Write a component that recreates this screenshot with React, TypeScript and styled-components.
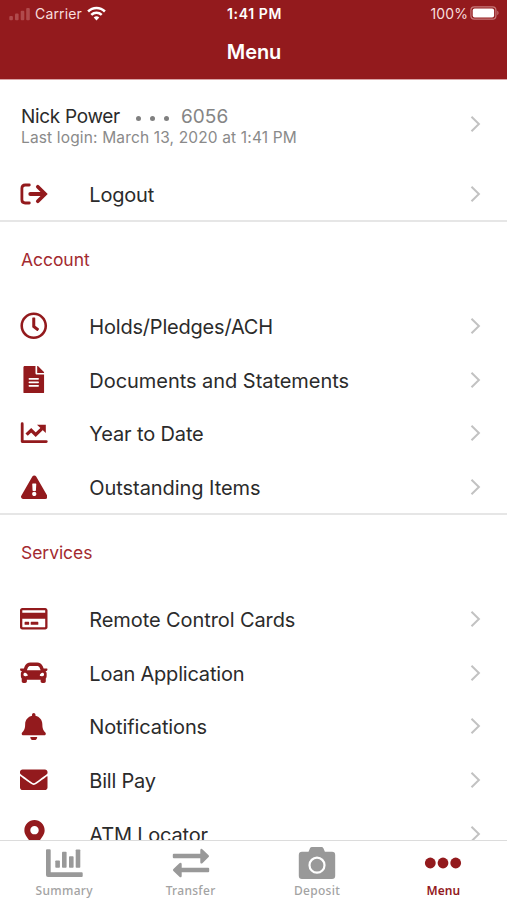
import React from "react";
import styled, { createGlobalStyle } from "styled-components";
import {
  FaBell,
  FaCar,
  FaEnvelope,
  FaExclamationTriangle,
  FaFileAlt,
  FaMapMarkerAlt,
  FaRegClock,
  FaRegCreditCard,
} from "react-icons/fa";

const RED = "#931a1d";
const GREY = "#999999";

const GlobalStyle = createGlobalStyle`
  * { box-sizing: border-box; }
  html, body { margin: 0; background: #fff; }
  body { font-family: Inter, "Liberation Sans", sans-serif; color: #2b2b2b; overflow: hidden; }
`;

const Screen = styled.div`
  width: 507px;
  height: 900px;
  display: flex;
  flex-direction: column;
  background: #fff;
  overflow: hidden;
`;

const Header = styled.header`
  flex: none;
  height: 80px;
  background: ${RED};
  border-bottom: 1px solid #d9a3a5;
  color: #fff;
`;

const StatusBar = styled.div`
  height: 27px;
  padding: 0 7px 0 9px;
  display: grid;
  grid-template-columns: 1fr auto 1fr;
  align-items: center;
  font-size: 14px;
  line-height: 27px;
`;

const StatusGroup = styled.div<{ $end?: boolean }>`
  display: flex;
  align-items: center;
  justify-content: ${(p) => (p.$end ? "flex-end" : "flex-start")};
`;

const StatusText = styled.span<{ $spacing: number }>`
  color: #f7dede;
  letter-spacing: ${(p) => p.$spacing}px;
`;

const Clock = styled.span`
  font-weight: 600;
  font-size: 14px;
  letter-spacing: 0.6px;
`;

const Signal = styled.svg`
  width: 22px;
  height: 14px;
  margin-right: 4px;
`;

const Wifi = styled.svg`
  width: 19px;
  height: 15px;
  margin-left: 5px;
  margin-top: -1px;
`;

const Battery = styled.svg`
  width: 30px;
  height: 14px;
  margin-left: 2px;
  margin-top: -1px;
`;

const Title = styled.h1`
  margin: 0;
  height: 51px;
  padding-left: 1px;
  text-align: center;
  font-size: 20px;
  font-weight: 600;
  line-height: 51px;
  letter-spacing: -0.1px;
`;

const Content = styled.main`
  flex: 1;
  min-height: 0;
  overflow: hidden;
`;

const Profile = styled.div`
  height: 87.1px;
  padding: 0 25px 0 21px;
  display: flex;
  align-items: center;
  justify-content: space-between;
`;

const ProfileText = styled.div`
  display: flex;
  flex-direction: column;
  padding-top: 6px;
`;

const NameLine = styled.div`
  display: flex;
  align-items: center;
  height: 22px;
  font-size: 19px;
  letter-spacing: -0.32px;
`;

const Dots = styled.span`
  display: flex;
  gap: 9px;
  margin: 3px 12px 0 16px;
`;

const Dot = styled.i`
  width: 5px;
  height: 5px;
  border-radius: 50%;
  background: #808080;
`;

const AccountNumber = styled.span`
  color: #858585;
  letter-spacing: 0.1px;
`;

const LastLogin = styled.div`
  height: 20px;
  line-height: 20px;
  color: #8a8a8a;
  font-size: 15.5px;
  letter-spacing: 0.15px;
  white-space: nowrap;
`;

const Row = styled.div`
  height: 53.75px;
  padding: 0 25px 0 20px;
  display: flex;
  align-items: center;
`;

const RowIcon = styled.span<{ $size: number }>`
  width: 28px;
  margin-right: 41.3px;
  display: flex;
  justify-content: center;
  color: ${RED};
  font-size: ${(p) => p.$size}px;
`;

const RowLabel = styled.span<{ $spacing: number }>`
  flex: 1;
  font-size: 20px;
  line-height: 28px;
  letter-spacing: ${(p) => p.$spacing}px;
  padding-top: 2px;
  white-space: nowrap;
`;

const ChevronSvg = styled.svg`
  flex: none;
  width: 14px;
  height: 18px;
`;

const SectionTitle = styled.h2`
  margin: -1px 0 0;
  height: 79.1px;
  padding-left: 21px;
  border-top: 2px solid #e6e6e6;
  color: #a32a30;
  font-size: 17.5px;
  font-weight: 400;
  line-height: 76px;
  letter-spacing: -0.05px;
`;

const TabBar = styled.nav`
  flex: none;
  height: 60px;
  border-top: 1px solid #dcdcdc;
  padding-left: 1px;
  display: grid;
  grid-template-columns: repeat(4, 126.4px);
  background: #fff;
`;

const Tab = styled.div<{ $active?: boolean }>`
  display: flex;
  flex-direction: column;
  align-items: center;
  color: ${(p) => (p.$active ? RED : GREY)};
  padding-top: 3px;
`;

const TabIcon = styled.span`
  height: 38px;
  display: flex;
  align-items: center;
`;

const TabLabel = styled.span<{ $active?: boolean }>`
  font-family: "Noto Sans", sans-serif;
  font-size: 12px;
  font-weight: ${(p) => (p.$active ? 600 : 500)};
  line-height: 18px;
  letter-spacing: ${(p) => (p.$active ? 0.1 : 0.3)}px;
  color: ${(p) => (p.$active ? RED : "#a3a3a3")};
`;

const Chevron = () => (
  <ChevronSvg viewBox="0 0 14 18" fill="none" stroke="#c2c2c2" strokeWidth="2">
    <path d="M3.5 1.8 10.9 9 3.5 16.2" />
  </ChevronSvg>
);

const LogoutIcon = () => (
  <svg width="28" height="22" viewBox="0 0 28 22" fill="none" stroke="currentColor" strokeLinecap="round">
    <path d="M9.3 2H5.2C3 2 1.9 3.1 1.9 5.2V16.8C1.9 18.9 3 20 5.2 20H9.3" strokeWidth="2.8" />
    <path d="M10.3 11H24" strokeWidth="3.9" />
    <path d="M17.8 3.7 25.1 11 17.8 18.3" strokeWidth="3.7" />
  </svg>
);

const TrendIcon = () => (
  <svg width="28" height="22" viewBox="0 0 28 22" fill="none" stroke="currentColor">
    <path d="M2.2 1.7V19.6H26.3" strokeWidth="2.8" strokeLinecap="round" strokeLinejoin="round" />
    <path d="M6.6 12.6 11.2 8.2 15.7 12.6 22 6.6" strokeWidth="3.3" />
    <path d="M17 2.8H25.8V11Z" fill="currentColor" stroke="none" />
  </svg>
);

const SummaryIcon = () => (
  <svg width="38" height="30" viewBox="0 0 38 30" fill="currentColor">
    <path d="M1 2.2a1 1 0 0 1 1-1h2.7a1 1 0 0 1 1 1v22.1h31a1 1 0 0 1 1 1V28a1 1 0 0 1-1 1H3a2 2 0 0 1-2-2Z" />
    <rect x="10.3" y="12.5" width="4.6" height="7.3" rx="0.8" />
    <rect x="17" y="3.8" width="4.6" height="16" rx="0.8" />
    <rect x="24" y="8.3" width="4.6" height="11.5" rx="0.8" />
    <rect x="30.7" y="1.5" width="4.6" height="18.3" rx="0.8" />
  </svg>
);

const TransferIcon = () => (
  <svg width="38" height="30" viewBox="0 0 38 30" fill="currentColor">
    <path d="M1.8 5.8h26.5V2.4c0-1.7 1.2-2.1 2.3-1l6 5.8a1.3 1.3 0 0 1 0 1.9l-6 5.8c-1.1 1-2.3.6-2.3-1v-3.6H1.8a1 1 0 0 1-1-1V6.8a1 1 0 0 1 1-1Z" />
    <path d="M36.2 19.7H9.7v-3.4c0-1.7-1.2-2.1-2.3-1l-6 5.8a1.3 1.3 0 0 0 0 1.9l6 5.8c1.1 1 2.3.6 2.3-1v-3.6h26.5a1 1 0 0 0 1-1v-2.5a1 1 0 0 0-1-1Z" />
  </svg>
);

const CameraIcon = () => (
  <svg width="38" height="34" viewBox="0 0 38 34">
    <path
      d="M4 5.8H10.5L12 2.3Q12.5 1 14 1H23.4Q24.9 1 25.4 2.3L26.9 5.8H34Q37.2 5.8 37.2 9V29.8Q37.2 33 34 33H4Q.8 33 .8 29.8V9Q.8 5.8 4 5.8Z"
      fill="currentColor"
    />
    <circle cx="19" cy="19.2" r="7.5" fill="none" stroke="#fff" strokeWidth="2.2" />
  </svg>
);

const MoreIcon = () => (
  <svg width="38" height="14" viewBox="0 0 38 14" fill="currentColor">
    <circle cx="6.3" cy="7" r="5.4" />
    <circle cx="19" cy="7" r="5.4" />
    <circle cx="31.7" cy="7" r="5.4" />
  </svg>
);

type Item = { label: string; icon: React.ReactNode; size: number; spacing: number };

const accountItems: Item[] = [
  { label: "Holds/Pledges/ACH", icon: <FaRegClock />, size: 27.5, spacing: -0.2 },
  { label: "Documents and Statements", icon: <FaFileAlt />, size: 27.5, spacing: -0.04 },
  { label: "Year to Date", icon: <TrendIcon />, size: 27, spacing: -0.13 },
  { label: "Outstanding Items", icon: <FaExclamationTriangle />, size: 26.5, spacing: -0.06 },
];

const serviceItems: Item[] = [
  { label: "Remote Control Cards", icon: <FaRegCreditCard />, size: 27.5, spacing: -0.09 },
  { label: "Loan Application", icon: <FaCar />, size: 27.5, spacing: -0.2 },
  { label: "Notifications", icon: <FaBell />, size: 27.5, spacing: -0.12 },
  { label: "Bill Pay", icon: <FaEnvelope />, size: 27.5, spacing: -0.2 },
  { label: "ATM Locator", icon: <FaMapMarkerAlt />, size: 27, spacing: -0.2 },
];

const MenuRow = ({ label, icon, size, spacing }: Item) => (
  <Row>
    <RowIcon $size={size}>{icon}</RowIcon>
    <RowLabel $spacing={spacing}>{label}</RowLabel>
    <Chevron />
  </Row>
);

export default function App() {
  return (
    <Screen>
      <GlobalStyle />
      <Header>
        <StatusBar>
          <StatusGroup>
            <Signal viewBox="0 0 22 14" fill="#b04a4c">
              <rect x="0.3" y="9" width="3.6" height="4.2" rx="1" />
              <rect x="6" y="6.5" width="3.6" height="6.7" rx="1" />
              <rect x="11.7" y="3.8" width="3.6" height="9.4" rx="1" />
              <rect x="17.2" y="1" width="3.6" height="12.2" rx="1" />
            </Signal>
            <StatusText $spacing={0.15}>Carrier</StatusText>
            <Wifi viewBox="0 0 19 15" fill="none" stroke="#fff" strokeWidth="2.5">
              <path d="M1.1 5.5a11.9 11.9 0 0 1 16.8 0" />
              <path d="M4.3 8.8a7.4 7.4 0 0 1 10.4 0" />
              <path d="M9.5 14.4 6.7 11.5a4 4 0 0 1 5.6 0Z" fill="#fff" stroke="none" />
            </Wifi>
          </StatusGroup>
          <Clock>1:41 PM</Clock>
          <StatusGroup $end>
            <StatusText $spacing={0.1}>100%</StatusText>
            <Battery viewBox="0 0 30 14">
              <rect x="0.9" y="0.8" width="25" height="12.4" rx="3.4" fill="none" stroke="#c77879" strokeWidth="1.2" />
              <rect x="2.7" y="2.6" width="21.4" height="8.8" rx="1.9" fill="#fff" />
              <path d="M27.3 4.8c1.6.6 1.6 3.8 0 4.4Z" fill="#c77879" />
            </Battery>
          </StatusGroup>
        </StatusBar>
        <Title>Menu</Title>
      </Header>
      <Content>
        <Profile>
          <ProfileText>
            <NameLine>
              <span>Nick Power</span>
              <Dots>
                <Dot />
                <Dot />
                <Dot />
              </Dots>
              <AccountNumber>6056</AccountNumber>
            </NameLine>
            <LastLogin>Last login: March 13, 2020 at 1:41 PM</LastLogin>
          </ProfileText>
          <Chevron />
        </Profile>
        <MenuRow label="Logout" icon={<LogoutIcon />} size={27} spacing={-0.2} />
        <SectionTitle>Account</SectionTitle>
        {accountItems.map((item) => (
          <MenuRow key={item.label} {...item} />
        ))}
        <SectionTitle>Services</SectionTitle>
        {serviceItems.map((item) => (
          <MenuRow key={item.label} {...item} />
        ))}
      </Content>
      <TabBar>
        <Tab>
          <TabIcon><SummaryIcon /></TabIcon>
          <TabLabel>Summary</TabLabel>
        </Tab>
        <Tab>
          <TabIcon><TransferIcon /></TabIcon>
          <TabLabel>Transfer</TabLabel>
        </Tab>
        <Tab>
          <TabIcon><CameraIcon /></TabIcon>
          <TabLabel>Deposit</TabLabel>
        </Tab>
        <Tab $active>
          <TabIcon><MoreIcon /></TabIcon>
          <TabLabel $active>Menu</TabLabel>
        </Tab>
      </TabBar>
    </Screen>
  );
}
